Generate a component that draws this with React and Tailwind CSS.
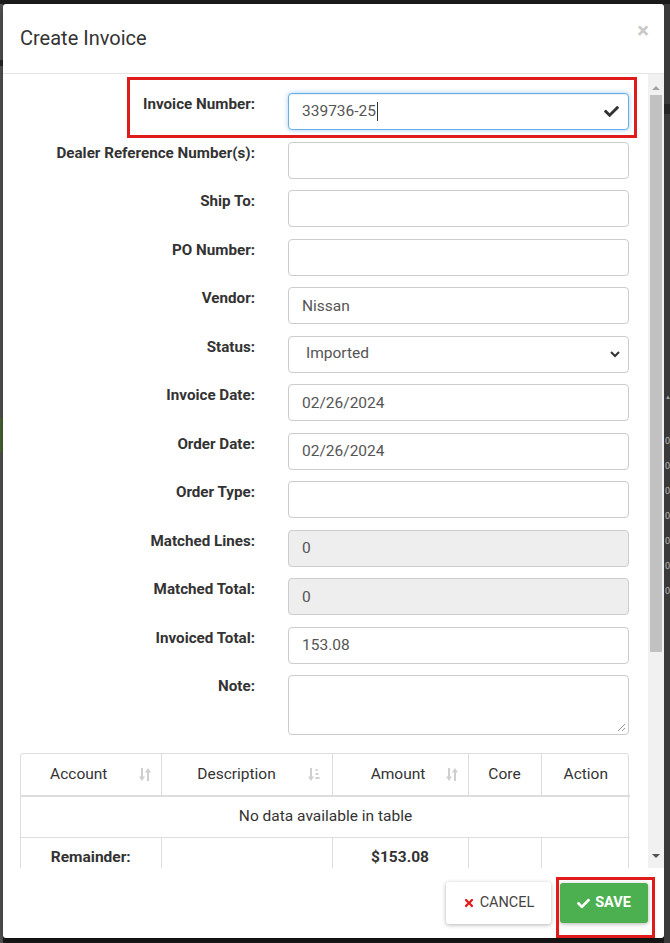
import React from 'react';
import { FaCheck, FaTimes } from 'react-icons/fa';

function SortBoth() {
  return (
    <svg width="12" height="15" viewBox="0 0 12 15" className="text-[#cfcfcf]" fill="currentColor">
      <rect x="2" y="1" width="2" height="10" />
      <path d="M0 9.5h6L3 14z" />
      <rect x="8" y="4" width="2" height="10" />
      <path d="M6 5.5h6L9 1z" />
    </svg>
  );
}

function SortDesc() {
  return (
    <svg width="12" height="15" viewBox="0 0 12 15" className="text-[#cfcfcf]" fill="currentColor">
      <rect x="2" y="1" width="2" height="10" />
      <path d="M0 9.5h6L3 14z" />
      <rect x="7.5" y="2" width="2" height="2" />
      <rect x="7.5" y="6" width="3" height="2" />
      <rect x="7.5" y="10" width="4" height="2" />
    </svg>
  );
}

function Field({ label, children }) {
  return (
    <div className="flex items-start">
      <label className="w-[252px] shrink-0 pt-[1px] text-right text-[15.2px] font-bold leading-[20px] text-[#333]">
        {label}
      </label>
      <div className="ml-[33px] w-[341px]">{children}</div>
    </div>
  );
}

function TextInput({ value = '', disabled = false }) {
  return (
    <input
      readOnly
      value={value}
      className={
        'block h-[37px] w-full rounded-[4px] border border-[#ccc] px-[13px] text-[15.5px] text-[#555] outline-none ' +
        (disabled ? 'bg-[#eee]' : 'bg-white')
      }
    />
  );
}

export default function App() {
  return (
    <div className="flex h-[943px] w-[670px] overflow-hidden bg-[#1c1c1c] pt-[4px] font-['Roboto',sans-serif]">
      {/* backdrop, left edge */}
      <div className="flex w-[3px] shrink-0 flex-col bg-[#575757]">
        <div className="mt-[56px] h-[6px] bg-[#2a2a2a]" />
        <div className="mt-[352px] h-[34px] bg-[#4d6a34]" />
      </div>

      {/* modal */}
      <div className="flex h-[934px] w-[661px] shrink-0 flex-col overflow-hidden rounded-[3px] bg-white shadow-[0_3px_9px_rgba(0,0,0,0.5)]">
        <div className="flex h-[70px] shrink-0 items-start justify-between border-b border-[#e5e5e5] pl-[17px] pr-[15px]">
          <h4 className="mt-[22px] text-[20px] leading-[24px] text-[#333]">Create Invoice</h4>
          <button className="mt-[15px] text-[22px] font-bold leading-[24px] text-[#c8c8c8]">×</button>
        </div>

        {/* body */}
        <div className="flex min-h-0 flex-1">
          <div className="relative min-w-0 flex-1 overflow-hidden pt-[19px]">
            <div className="absolute left-[124px] top-[3px] h-[61px] w-[510px] border-[3px] border-[#e01b1b]" />

            <div className="flex flex-col gap-[11.5px]">
              <Field label="Invoice Number:">
                <div className="flex h-[37px] items-center rounded-[4px] border border-[#66afe9] bg-white pl-[13px] pr-[9px] text-[15.5px] text-[#555] shadow-[inset_0_1px_1px_rgba(0,0,0,0.075),0_0_5px_rgba(102,175,233,0.6)]">
                  <span>339736-25</span>
                  <span className="ml-[1px] h-[19px] w-[1px] bg-[#333]" />
                  <FaCheck className="ml-auto text-[15px] text-[#333]" />
                </div>
              </Field>
              <Field label="Dealer Reference Number(s):">
                <TextInput />
              </Field>
              <Field label="Ship To:">
                <TextInput />
              </Field>
              <Field label="PO Number:">
                <TextInput />
              </Field>
              <Field label="Vendor:">
                <TextInput value="Nissan" />
              </Field>
              <Field label="Status:">
                <div className="flex h-[37px] items-center rounded-[4px] border border-[#ccc] bg-white pl-[17px] pr-[8px] text-[15.5px] text-[#555]">
                  <span>Imported</span>
                  <svg width="10" height="7" viewBox="0 0 10 7" className="ml-auto" fill="none" stroke="#333" strokeWidth="2">
                    <path d="M1 1l4 4 4-4" />
                  </svg>
                </div>
              </Field>
              <Field label="Invoice Date:">
                <TextInput value="02/26/2024" />
              </Field>
              <Field label="Order Date:">
                <TextInput value="02/26/2024" />
              </Field>
              <Field label="Order Type:">
                <TextInput />
              </Field>
              <Field label="Matched Lines:">
                <TextInput value="0" disabled />
              </Field>
              <Field label="Matched Total:">
                <TextInput value="0" disabled />
              </Field>
              <Field label="Invoiced Total:">
                <TextInput value="153.08" />
              </Field>
              <Field label="Note:">
                <div className="relative h-[60px] rounded-[4px] border border-[#ccc] bg-white">
                  <svg width="9" height="9" viewBox="0 0 9 9" className="absolute bottom-[2px] right-[2px]" stroke="#999" strokeWidth="1">
                    <path d="M8 1L1 8M8 5L5 8" />
                  </svg>
                </div>
              </Field>
            </div>

            {/* lines table */}
            <div className="ml-[17px] mt-[18px] w-[609px] rounded-[3px] border border-[#ddd]">
              <table className="w-full table-fixed border-collapse text-[15.5px] text-[#333]">
                <colgroup>
                  <col className="w-[140px]" />
                  <col className="w-[171px]" />
                  <col className="w-[136px]" />
                  <col className="w-[73px]" />
                  <col className="w-[89px]" />
                </colgroup>
                <thead>
                  <tr className="h-[42px] border-b-2 border-[#ddd]">
                    <th className="relative border-r border-[#ddd] pr-[24px] font-normal">
                      Account
                      <span className="absolute right-[10px] top-[13px]"><SortBoth /></span>
                    </th>
                    <th className="relative border-r border-[#ddd] pr-[20px] font-normal">
                      Description
                      <span className="absolute right-[12px] top-[13px]"><SortDesc /></span>
                    </th>
                    <th className="relative border-r border-[#ddd] pr-[4px] font-normal">
                      Amount
                      <span className="absolute right-[10px] top-[13px]"><SortBoth /></span>
                    </th>
                    <th className="border-r border-[#ddd] font-normal">Core</th>
                    <th className="font-normal">Action</th>
                  </tr>
                </thead>
                <tbody>
                  <tr className="h-[41px] border-b border-[#ddd]">
                    <td colSpan={5} className="text-center">No data available in table</td>
                  </tr>
                  <tr className="h-[41px] font-bold">
                    <td className="border-r border-[#ddd] text-center">Remainder:</td>
                    <td className="border-r border-[#ddd]" />
                    <td className="border-r border-[#ddd] text-center">$153.08</td>
                    <td className="border-r border-[#ddd]" />
                    <td />
                  </tr>
                </tbody>
              </table>
            </div>
          </div>

          {/* scrollbar */}
          <div className="flex w-[16px] shrink-0 flex-col bg-[#f1f1f1]">
            <div className="flex h-[21px] items-center justify-center pt-[6px]">
              <div className="h-0 w-0 border-x-[4px] border-b-[4px] border-x-transparent border-b-[#a3a3a3]" />
            </div>
            <div className="mx-[2px] h-[557px] bg-[#c1c1c1]" />
            <div className="flex-1" />
            <div className="flex h-[21px] items-center justify-center pb-[4px]">
              <div className="h-0 w-0 border-x-[4px] border-t-[4px] border-x-transparent border-t-[#505050]" />
            </div>
          </div>
        </div>

        {/* footer */}
        <div className="relative flex h-[70px] shrink-0 items-center justify-end gap-[9px] pr-[16px]">
          <button className="flex h-[42px] w-[105px] items-center justify-center gap-[5px] rounded-[3px] bg-white text-[14.5px] text-[#444] shadow-[0_1px_4px_rgba(0,0,0,0.3)]">
            <FaTimes className="text-[12px] text-[#e41b1b]" />
            CANCEL
          </button>
          <button className="flex h-[40px] w-[88px] items-center justify-center gap-[5px] rounded-[3px] bg-[#4caf50] text-[14.5px] font-bold text-white shadow-[0_1px_4px_rgba(0,0,0,0.3)]">
            <FaCheck className="text-[13px]" />
            SAVE
          </button>
          <div className="absolute bottom-0 right-[9px] h-[61px] w-[99px] border-[3px] border-[#e01b1b]" />
        </div>
      </div>

      {/* backdrop, right edge */}
      <div className="flex min-w-0 flex-1 flex-col overflow-hidden bg-[#3a3a3a] text-[9px] leading-[25px] text-[#bbb]">
        <div className="mt-[100px] h-[10px] shrink-0 bg-[#262626]" />
        <div className="mt-[270px] pl-[1px] text-[6px] text-[#9aa]">▲</div>
        <div className="mt-[20px] flex flex-col pl-[1px]">
          <span>0</span>
          <span>0</span>
          <span>0</span>
          <span>0</span>
          <span>0</span>
          <span>0</span>
          <span>0</span>
        </div>
      </div>
    </div>
  );
}
